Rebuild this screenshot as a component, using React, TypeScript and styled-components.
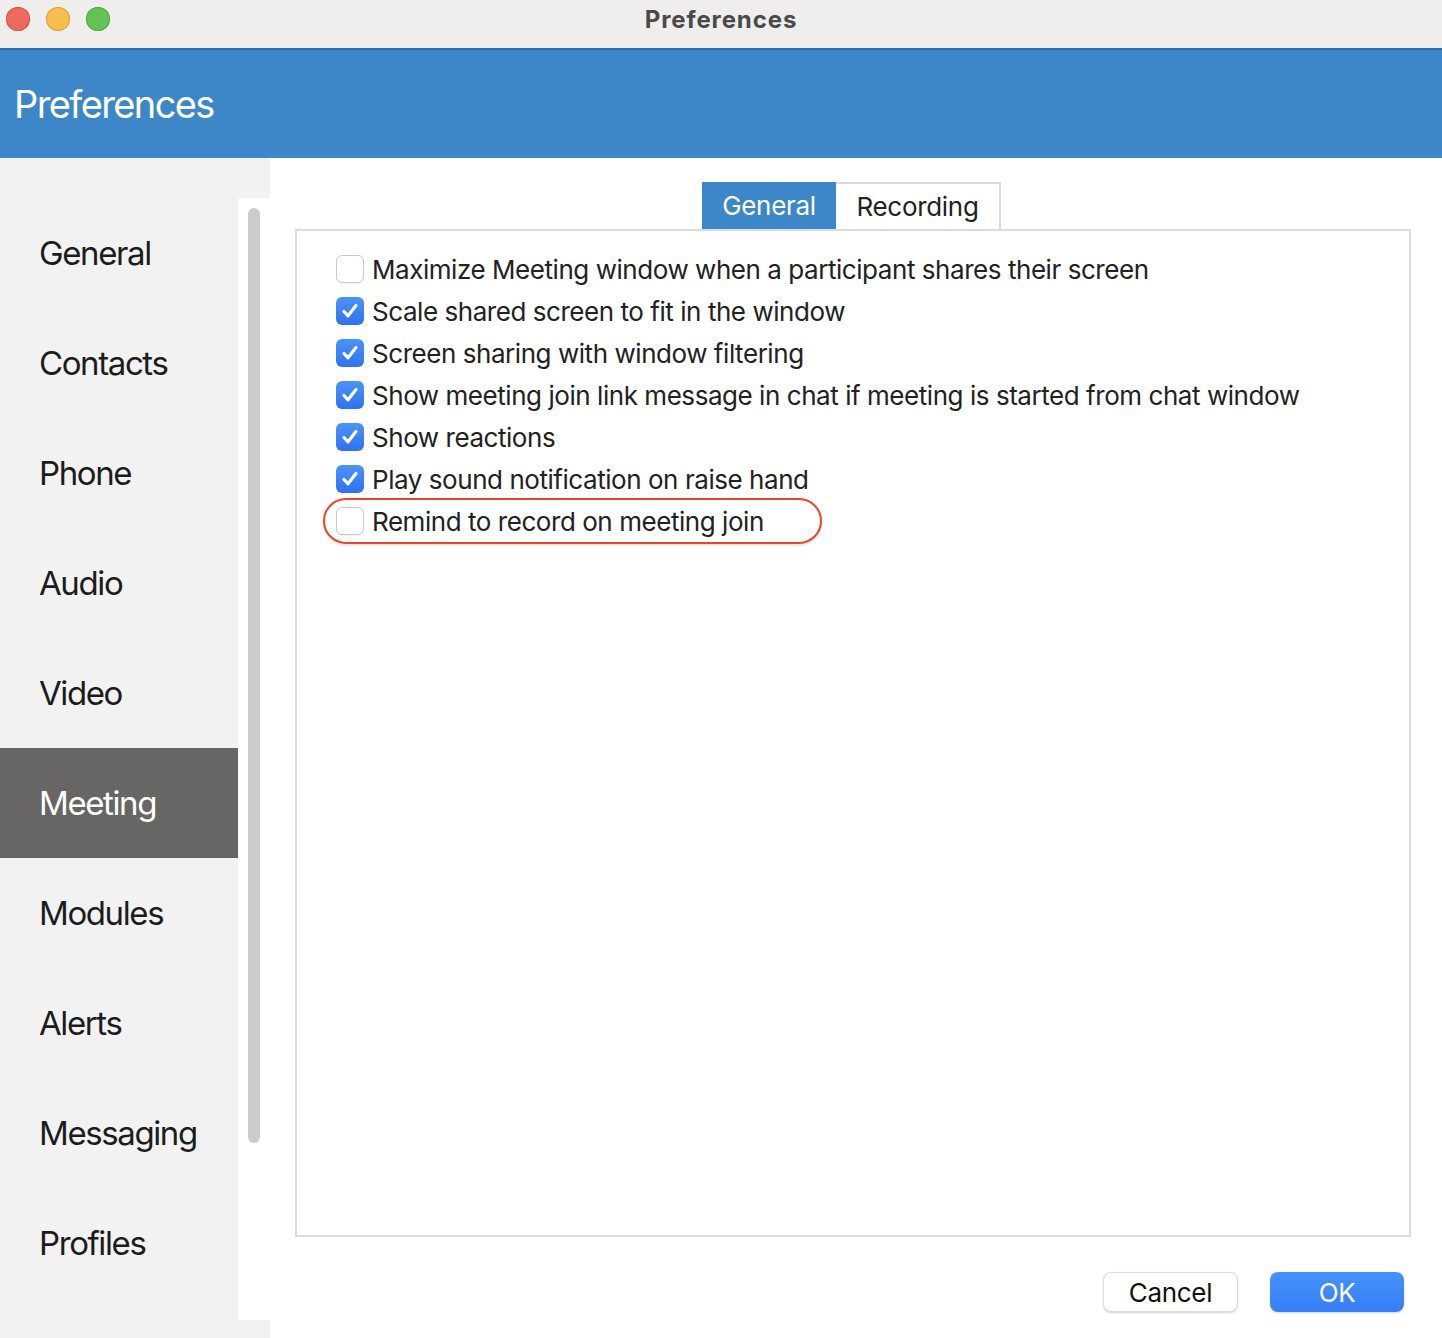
import React from 'react';
import styled, { createGlobalStyle } from 'styled-components';

const GlobalStyle = createGlobalStyle`
  html, body {
    margin: 0;
    padding: 0;
    background: #ffffff;
  }
  body {
    font-family: Inter, "Noto Sans", "Liberation Sans", sans-serif;
  }
`;

const Window = styled.div`
  display: flex;
  flex-direction: column;
  width: 1442px;
  height: 1338px;
  overflow: hidden;
  background: #ffffff;
`;

const TitleBar = styled.div`
  display: grid;
  grid-template-columns: 1fr auto 1fr;
  align-items: center;
  box-sizing: border-box;
  height: 48px;
  padding-bottom: 10px;
  background: #efeeec;
`;

const Lights = styled.div`
  display: flex;
  gap: 16px;
  padding-left: 6px;
`;

const Light = styled.span<{ color: string; edge: string }>`
  width: 24px;
  height: 24px;
  border-radius: 50%;
  background: ${(p) => p.color};
  box-shadow: inset 0 0 0 1px ${(p) => p.edge};
`;

const WindowTitle = styled.div`
  font-size: 24px;
  font-weight: 700;
  color: #4a4a4a;
  letter-spacing: 0.9px;
`;

const Header = styled.div`
  display: flex;
  align-items: center;
  height: 108px;
  padding-left: 14px;
  background: #3d87c8;
  border-top: 2px solid #2e6cad;
`;

const HeaderTitle = styled.h1`
  margin: 0;
  font-size: 38px;
  font-weight: 400;
  color: #ffffff;
  letter-spacing: -1.6px;
`;

const Body = styled.div`
  display: flex;
  flex: 1;
  min-height: 0;
`;

const Sidebar = styled.nav`
  display: flex;
  flex-direction: column;
  width: 238px;
  padding-top: 40px;
  background: #f2f2f2;
`;

const NavItem = styled.div<{ active?: boolean }>`
  display: flex;
  align-items: center;
  height: 110px;
  padding-left: 39px;
  font-size: 33px;
  letter-spacing: -1.4px;
  color: ${(p) => (p.active ? '#ffffff' : '#1c1c1c')};
  background: ${(p) => (p.active ? '#686664' : 'transparent')};
`;

const Gutter = styled.div`
  display: flex;
  flex-direction: column;
  width: 32px;
`;

const GutterCap = styled.div<{ h: number }>`
  height: ${(p) => p.h}px;
  background: #f2f2f2;
`;

const Track = styled.div`
  flex: 1;
  padding: 10px 0 0 10px;
  background: #ffffff;
`;

const Thumb = styled.div`
  width: 12px;
  height: 935px;
  border-radius: 6px;
  background: #cbcbcb;
`;

const Main = styled.main`
  display: flex;
  flex-direction: column;
  flex: 1;
  padding: 24px 31px 26px 25px;
`;

const Tabs = styled.div`
  display: flex;
  justify-content: center;
  padding-right: 3px;
`;

const Tab = styled.div<{ active?: boolean }>`
  display: flex;
  align-items: center;
  justify-content: center;
  box-sizing: border-box;
  height: 47px;
  font-size: 26px;
  letter-spacing: -0.3px;
  ${(p) =>
    p.active
      ? `width: 134px; background: #3d87c8; color: #ffffff;`
      : `width: 165px; background: #ffffff; color: #222222;
         border: 2px solid #dcdcdc; border-bottom: none; border-left: none;`}
`;

const Panel = styled.section`
  display: flex;
  flex-direction: column;
  align-items: flex-start;
  flex: 1;
  padding: 17px 0 0 39px;
  border: 2px solid #dcdcdc;
`;

const Row = styled.label`
  display: flex;
  align-items: center;
  gap: 8px;
  height: 42px;
  font-size: 26px;
  letter-spacing: -0.45px;
  color: #222222;
`;

const Highlight = styled.div`
  display: flex;
  align-items: center;
  box-sizing: border-box;
  width: 499px;
  height: 46px;
  margin: -2px 0 0 -13px;
  padding-left: 11px;
  border: 2px solid #e4472f;
  border-radius: 23px;
  box-shadow: 0 1px 3px rgba(0, 0, 0, 0.18);
`;

const Box = styled.span<{ checked: boolean }>`
  display: flex;
  align-items: center;
  justify-content: center;
  box-sizing: border-box;
  width: 28px;
  height: 28px;
  border-radius: 6px;
  ${(p) =>
    p.checked
      ? `background: linear-gradient(#4b93f8, #2f72ef);`
      : `background: #ffffff; border: 1px solid #c9c9c9; box-shadow: 0 1px 1px rgba(0,0,0,0.06);`}
`;

const Footer = styled.div`
  display: flex;
  justify-content: flex-end;
  gap: 32px;
  padding: 35px 7px 0 0;
`;

const Button = styled.button<{ primary?: boolean }>`
  box-sizing: border-box;
  width: ${(p) => (p.primary ? 134 : 135)}px;
  height: 40px;
  border-radius: 8px;
  font-family: inherit;
  font-size: 26px;
  letter-spacing: -0.3px;
  ${(p) =>
    p.primary
      ? `border: none; color: #ffffff; background: linear-gradient(#4592fb, #377ef8);
         box-shadow: 0 1px 2px rgba(55, 126, 248, 0.3);`
      : `border: 1px solid #dedede; color: #111111; background: #ffffff;
         box-shadow: 0 1px 2px rgba(0, 0, 0, 0.18);`}
`;

const Check = ({ checked }: { checked: boolean }) => (
  <Box checked={checked}>
    {checked && (
      <svg width="20" height="20" viewBox="0 0 20 20">
        <path
          d="M4 10.5 L8 14.8 L16 4.5"
          fill="none"
          stroke="#ffffff"
          strokeWidth="3.2"
          strokeLinecap="round"
          strokeLinejoin="round"
        />
      </svg>
    )}
  </Box>
);

const navItems = ['General', 'Contacts', 'Phone', 'Audio', 'Video', 'Meeting', 'Modules', 'Alerts', 'Messaging', 'Profiles'];

const options = [
  { label: 'Maximize Meeting window when a participant shares their screen', checked: false },
  { label: 'Scale shared screen to fit in the window', checked: true },
  { label: 'Screen sharing with window filtering', checked: true },
  { label: 'Show meeting join link message in chat if meeting is started from chat window', checked: true },
  { label: 'Show reactions', checked: true },
  { label: 'Play sound notification on raise hand', checked: true },
];

export default function App() {
  return (
    <>
      <GlobalStyle />
      <Window>
        <TitleBar>
          <Lights>
            <Light color="#ee6a5e" edge="#d5564b" />
            <Light color="#f6be4f" edge="#dca43c" />
            <Light color="#61c454" edge="#4fa942" />
          </Lights>
          <WindowTitle>Preferences</WindowTitle>
          <div />
        </TitleBar>
        <Header>
          <HeaderTitle>Preferences</HeaderTitle>
        </Header>
        <Body>
          <Sidebar>
            {navItems.map((item) => (
              <NavItem key={item} active={item === 'Meeting'}>
                {item}
              </NavItem>
            ))}
          </Sidebar>
          <Gutter>
            <GutterCap h={40} />
            <Track>
              <Thumb />
            </Track>
            <GutterCap h={18} />
          </Gutter>
          <Main>
            <Tabs>
              <Tab active>General</Tab>
              <Tab>Recording</Tab>
            </Tabs>
            <Panel>
              {options.map((o) => (
                <Row key={o.label}>
                  <Check checked={o.checked} />
                  {o.label}
                </Row>
              ))}
              <Highlight>
                <Row>
                  <Check checked={false} />
                  Remind to record on meeting join
                </Row>
              </Highlight>
            </Panel>
            <Footer>
              <Button>Cancel</Button>
              <Button primary>OK</Button>
            </Footer>
          </Main>
        </Body>
      </Window>
    </>
  );
}
